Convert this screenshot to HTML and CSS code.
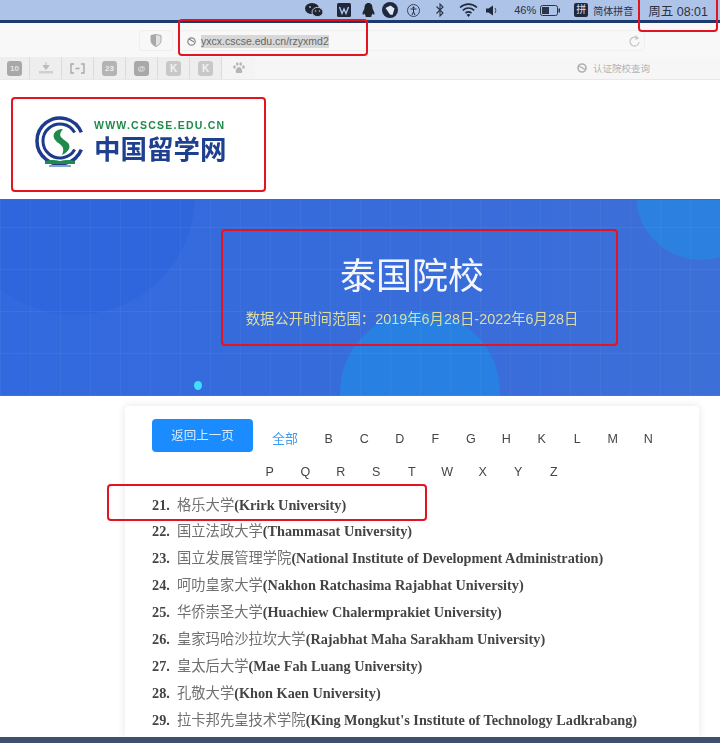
FILE: index.html
```html
<!DOCTYPE html>
<html lang="zh-CN">
<head>
    <meta charset="UTF-8">
    <meta name="viewport" content="width=device-width, initial-scale=1.0">
    <title>泰国院校</title>
    <link rel="stylesheet" href="styles.css">
</head>
<body>
<div class="page">
    <div class="menubar">
        <svg class="mi mi-wechat" width="18" height="14" viewBox="0 0 18 14"><ellipse cx="7" cy="5.5" rx="7" ry="5.5" fill="#20242e"/><ellipse cx="12.5" cy="9" rx="5.5" ry="4.6" fill="#20242e" stroke="#aec3e8"/><circle cx="10.5" cy="8" r=".8" fill="#aec3e8"/><circle cx="14.5" cy="8" r=".8" fill="#aec3e8"/><circle cx="5" cy="4" r=".9" fill="#aec3e8"/></svg>
        <svg class="mi mi-wps" width="14" height="14" viewBox="0 0 14 14"><rect width="14" height="14" rx="1.5" fill="#20283c"/><path d="M2.5 4l2.5 6.5L7 6l2 4.5L11.5 4" fill="none" stroke="#aec3e8" stroke-width="1.4"/></svg>
        <svg class="mi mi-bell" width="13" height="14" viewBox="0 0 13 14"><path d="M6.5 0C3.500 0 2.500 2.500 2.500 5 2.500 7 0 9 .5 11.500c.8.400 1.400-.5 1.800-1 .3 1 .8 1.800 1.500 2.300-.7.400-.7 1.200 1 1.200h3.400c1.700 0 1.700-.8 1-1.200.7-.5 1.200-1.300 1.500-2.300.4.500 1 1.400 1.800 1C13 9 10.500 7 10.500 5c0-2.500-1-5-4-5z" fill="#20242e"/></svg>
        <svg class="mi mi-shield" width="16" height="16" viewBox="0 0 16 16"><circle cx="8" cy="8" r="8" fill="#20283c"/><path d="M3.500 6 8.500 3.500l4 3-2 6.500-2.500-.5z" fill="#dfe8f8"/></svg>
        <svg class="mi mi-access" width="13" height="13" viewBox="0 0 13 13"><circle cx="6.500" cy="6.500" r="6" fill="none" stroke="#3a4258"/><circle cx="6.500" cy="3.500" r="1" fill="#20283c"/><path d="M3.500 5h6M6.500 5v3M6.500 8l-1.500 3M6.500 8l1.500 3" stroke="#20283c" fill="none"/></svg>
        <svg class="mi mi-bt" width="8" height="14" viewBox="0 0 8 14"><path d="M.5 3.500 7 10 4 13V1l3 3-6.500 6.500" fill="none" stroke="#2c3448" stroke-width="1.1"/></svg>
        <svg class="mi mi-wifi" width="19" height="14" viewBox="0 0 19 14"><path d="M1 4.500c5-4.500 12-4.500 17 0M3.800 7.300c3.500-3 8-3 11.400 0M6.500 10c2-1.500 4-1.500 6 0" fill="none" stroke="#20283c" stroke-width="1.6"/><path d="M9.500 14l-1.900-2.300c1.200-.8 2.600-.8 3.800 0z" fill="#20283c"/></svg>
        <svg class="mi mi-sound" width="12" height="11" viewBox="0 0 12 11"><path d="M0 3.500h2.500L7 .5v10L2.500 7.500H0z" fill="#20283c"/><path d="M9 3c1 1.500 1 3.500 0 5" fill="none" stroke="#3a4258"/></svg>
        <span class="mi mi-percent">46%</span>
        <svg class="mi mi-battery" width="20" height="11" viewBox="0 0 20 11"><rect x=".5" y=".5" width="17" height="10" rx="2" fill="none" stroke="#2c3448"/><rect x="2" y="2" width="7" height="7" fill="#2c3448"/><rect x="18.500" y="3.500" width="1.500" height="4" fill="#2c3448"/></svg>
        <span class="mi mi-ime">拼</span>
        <span class="mi mi-imetext">简体拼音</span>
        <span class="mi mi-time">周五 08:01</span>
    </div>
    <div class="strip"></div>

    <div class="toolbar">
        <div class="shield-btn">
            <svg width="12" height="13" viewBox="0 0 12 13"><path d="M1 1.500 6 .5l5 1v5c0 3-2.500 5-5 6-2.500-1-5-3-5-6z" fill="#e2e2e2" stroke="#a8a8a8"/><path d="M1 1.500 6 .5v12c-2.500-1-5-3-5-6z" fill="#a8a8a8"/></svg>
        </div>
        <div class="address">
            <svg class="site-icon" width="9" height="9" viewBox="0 0 9 9"><circle cx="4.500" cy="4.500" r="3.700" fill="none" stroke="#888" stroke-width="1.2"/><path d="M2 2l5 3" stroke="#888" stroke-width="1.2"/></svg>
            <span class="url">yxcx.cscse.edu.cn/rzyxmd2</span>
            <svg class="reload" width="11" height="12" viewBox="0 0 11 12"><path d="M8.800 3.500A4.500 4.500 0 1 0 10 7" fill="none" stroke="#c0c0c0" stroke-width="1.1"/><path d="M6.500 .5l2.500 3-3 .8" fill="none" stroke="#c0c0c0" stroke-width="1.1"/></svg>
        </div>
    </div>

    <div class="bookmarks">
        <div class="bm-group">
            <div class="bm bm-first"><span class="bm-square bm-dark">10</span></div>
            <div class="bm">
                <svg width="14" height="12" viewBox="0 0 14 12"><path d="M7 0v5M4 3.500h6L7 7.500z" stroke="#bdbdbd" fill="#bdbdbd"/><rect x="0" y="9" width="14" height="2.500" fill="#cfcfcf"/></svg>
            </div>
            <div class="bm">
                <svg width="15" height="11" viewBox="0 0 15 11"><path d="M4 1H1v9h3M11 1h3v9h-3M5.500 5.500h4" fill="none" stroke="#a9a9a9" stroke-width="1.4"/></svg>
            </div>
            <div class="bm"><span class="bm-square bm-chain">23</span></div>
            <div class="bm"><span class="bm-square bm-dark">@</span></div>
            <div class="bm"><span class="bm-square bm-light">K</span></div>
            <div class="bm"><span class="bm-square bm-light">K</span></div>
            <div class="bm bm-last">
                <svg width="12" height="12" viewBox="0 0 12 12" fill="#b5b5b5"><ellipse cx="1.500" cy="5" rx="1.300" ry="1.700"/><ellipse cx="4.300" cy="2" rx="1.300" ry="1.800"/><ellipse cx="7.700" cy="2" rx="1.300" ry="1.800"/><ellipse cx="10.500" cy="5" rx="1.300" ry="1.700"/><path d="M6 5C4 5 2.500 8 2.800 10c.3 1.500 2 1 3.200 1s2.900.5 3.200-1C9.500 8 8 5 6 5z"/></svg>
            </div>
        </div>
        <div class="verify">
            <svg width="10" height="10" viewBox="0 0 10 10"><circle cx="5" cy="5" r="4" fill="none" stroke="#b0b0b0" stroke-width="1.6"/><path d="M2 3l6 3.500" stroke="#b0b0b0" stroke-width="1.4"/></svg>
            <span>认证院校查询</span>
        </div>
    </div>

    <div class="logo-area">
        <svg class="logo-mark" width="50" height="52" viewBox="0 0 50 52">
            <path d="M46.300 16.400A23 23 0 1 0 46.300 33.600" fill="none" stroke="#1d3a8f" stroke-width="3.5"/>
            <path d="M39.700 16.500A17 17 0 1 0 39.700 33.500" fill="none" stroke="#1d3a8f" stroke-width="3"/>
            <path d="M28 13C19 13 16 20 21 25 25 29 31 30 27 39 34 36 37 30 32 26 27 22 22 20 28 13z" fill="#1f8a4c"/>
            <path d="M10 45c5-1.500 10-1.500 15 0 5-1.500 10-1.500 15 0v3H10z" fill="#1f8a4c"/>
            <path d="M14 49h22v2H14z" fill="#8aa3c8"/>
        </svg>
        <div class="logo-text">
            <div class="logo-url">WWW.CSCSE.EDU.CN</div>
            <div class="logo-name">中国留学网</div>
        </div>
    </div>

    <div class="banner">
        <div class="circle circle-left"></div>
        <div class="circle circle-right"></div>
        <div class="circle circle-bottom"></div>
        <div class="banner-grid"></div>
        <div class="banner-text">
            <h1>泰国院校</h1>
            <p>数据公开时间范围：2019年6月28日-2022年6月28日</p>
        </div>
        <div class="banner-dot"></div>
    </div>

    <div class="main">
        <div class="card">
            <div class="filter">
                <a class="back-button">返回上一页</a>
                <div class="letters">
                    <span class="letter-all">全部</span>
                    <span class="letter">B</span>
                    <span class="letter">C</span>
                    <span class="letter">D</span>
                    <span class="letter">F</span>
                    <span class="letter">G</span>
                    <span class="letter">H</span>
                    <span class="letter">K</span>
                    <span class="letter">L</span>
                    <span class="letter">M</span>
                    <span class="letter">N</span>
                    <span class="letter">P</span>
                    <span class="letter">Q</span>
                    <span class="letter">R</span>
                    <span class="letter">S</span>
                    <span class="letter">T</span>
                    <span class="letter">W</span>
                    <span class="letter">X</span>
                    <span class="letter">Y</span>
                    <span class="letter">Z</span>
                </div>
            </div>
            <ul class="schools">
                <li><b class="num">21.</b><span class="cn">格乐大学</span><b>(Krirk University)</b></li>
                <li><b class="num">22.</b><span class="cn">国立法政大学</span><b>(Thammasat University)</b></li>
                <li><b class="num">23.</b><span class="cn">国立发展管理学院</span><b>(National Institute of Development Administration)</b></li>
                <li><b class="num">24.</b><span class="cn">呵叻皇家大学</span><b>(Nakhon Ratchasima Rajabhat University)</b></li>
                <li><b class="num">25.</b><span class="cn">华侨崇圣大学</span><b>(Huachiew Chalermprakiet University)</b></li>
                <li><b class="num">26.</b><span class="cn">皇家玛哈沙拉坎大学</span><b>(Rajabhat Maha Sarakham University)</b></li>
                <li><b class="num">27.</b><span class="cn">皇太后大学</span><b>(Mae Fah Luang University)</b></li>
                <li><b class="num">28.</b><span class="cn">孔敬大学</span><b>(Khon Kaen University)</b></li>
                <li><b class="num">29.</b><span class="cn">拉卡邦先皇技术学院</span><b>(King Mongkut's Institute of Technology Ladkrabang)</b></li>
            </ul>
        </div>
    </div>
    <div class="dock-edge"></div>

    <!-- red marks drawn over the screenshot -->
    <div class="mark mark-url"></div>
    <div class="mark mark-time"></div>
    <div class="mark mark-logo"></div>
    <div class="mark mark-banner"></div>
    <div class="mark mark-row"></div>
</div>
</body>
</html>
```

FILE: styles.css
```css
html, body {
    margin: 0;
    padding: 0;
    height: 100%;
    overflow: hidden;
    background-color: #fff;
}
.page {
    position: relative;
    display: flex;
    flex-direction: column;
    height: 743px;
    overflow: hidden;
    font-family: "Liberation Sans", "Noto Sans CJK SC", sans-serif;
    filter: blur(0.45px);
}

/* system menu bar */
.menubar {
    flex: none;
    height: 20px;
    display: flex;
    align-items: center;
    justify-content: flex-end;
    padding-right: 12px;
    background-color: #aec3e8;
    color: #2a3246;
}
.mi { flex: none; }
.mi-wps { margin-left: 14px; }
.mi-bell { margin-left: 11px; }
.mi-shield { margin-left: 7px; }
.mi-access { margin-left: 9px; }
.mi-bt { margin-left: 16px; }
.mi-wifi { margin-left: 15px; }
.mi-sound { margin-left: 8px; }
.mi-percent { margin-left: 16px; font-size: 11px; }
.mi-battery { margin-left: 4px; }
.mi-ime {
    margin-left: 14px;
    width: 14px;
    height: 14px;
    border-radius: 2px;
    background-color: #20283c;
    color: #d5def0;
    font-size: 10px;
    line-height: 14px;
    text-align: center;
}
.mi-imetext { margin-left: 5px; font-size: 10px; }
.mi-time { margin-left: 15px; font-size: 12.5px; white-space: nowrap; }
.strip {
    flex: none;
    height: 3px;
    background-color: #1d3a70;
}

/* browser toolbar */
.toolbar {
    flex: none;
    height: 34px;
    box-sizing: border-box;
    padding: 7px 75px 0 139px;
    display: flex;
    background-color: #f8f8f8;
}
.shield-btn {
    width: 34px;
    height: 21px;
    margin-right: 6px;
    display: flex;
    align-items: center;
    justify-content: center;
    box-sizing: border-box;
    border: 1px solid #eee;
    border-radius: 4px;
}
.address {
    flex: 1;
    height: 21px;
    box-sizing: border-box;
    padding: 1px 4px 0 7px;
    display: flex;
    align-items: center;
    background-color: #f8f8f8;
    border: 1px solid #f0f0f0;
    border-radius: 4px;
}
.site-icon { margin-right: 5px; }
.url {
    background-color: #d8d8d8;
    color: #666;
    font-size: 10.5px;
    line-height: 13px;
}
.reload { margin-left: auto; }

/* bookmarks */
.bookmarks {
    flex: none;
    height: 23px;
    display: flex;
    align-items: center;
    justify-content: space-between;
    background-color: #f6f6f6;
    border-bottom: 1px solid #e8e8e8;
    box-sizing: border-box;
}
.bm-group {
    display: flex;
    height: 100%;
    background-color: #eeeeee;
}
.bm {
    width: 32px;
    display: flex;
    align-items: center;
    justify-content: center;
    border-right: 1px solid #dcdcdc;
    box-sizing: border-box;
}
.bm-first { width: 30px; }
.bm-last { width: 33px; border-right: none; background-color: #f4f4f4; }
.bm-square {
    width: 15px;
    height: 15px;
    border-radius: 3px;
    font-size: 8px;
    line-height: 15px;
    text-align: center;
    font-weight: bold;
}
.bm-dark { background-color: #a8a8a8; color: #e4e4e4; }
.bm-chain { background-color: #b4b4b4; color: #eee; }
.bm-light { background-color: #c8c8c8; color: #f2f2f2; font-size: 10px; }
.verify {
    display: flex;
    align-items: center;
    gap: 6px;
    padding-right: 70px;
    color: #b4b4b4;
    font-size: 9.5px;
}

/* logo */
.logo-area {
    flex: none;
    height: 119px;
    box-sizing: border-box;
    padding: 36px 0 0 35px;
    display: flex;
    align-items: flex-start;
    background-color: #fff;
}
.logo-mark { margin-right: 9px; }
.logo-text { margin-top: 3px; }
.logo-url {
    color: #1f8a4c;
    font-size: 10.5px;
    font-weight: bold;
    letter-spacing: 1.25px;
    line-height: 12px;
    white-space: nowrap;
}
.logo-name {
    margin-top: 3px;
    color: #1f3f8f;
    font-size: 26.5px;
    font-weight: bold;
    line-height: 32px;
    white-space: nowrap;
}

/* banner */
.banner {
    position: relative;
    flex: none;
    height: 197px;
    overflow: hidden;
    background: linear-gradient(90deg, #3269de, #3d6fd8);
    border-top: 1px solid #5a5fb0;
    box-sizing: border-box;
}
.circle {
    position: absolute;
    border-radius: 50%;
}
.circle-left {
    left: -45px;
    top: -125px;
    width: 240px;
    height: 240px;
    background-color: #2f66de;
}
.circle-right {
    left: 636px;
    top: -70px;
    width: 130px;
    height: 130px;
    background-color: #2b80e0;
}
.circle-bottom {
    left: 340px;
    top: 112px;
    width: 160px;
    height: 160px;
    background-color: #2880e2;
}
.banner-grid {
    position: absolute;
    inset: 0;
    background-image:
        repeating-linear-gradient(90deg, rgba(255, 255, 255, 0.04) 0 1px, transparent 1px 30px),
        repeating-linear-gradient(0deg, rgba(255, 255, 255, 0.05) 0 1px, transparent 1px 42px);
}
.banner-text {
    position: relative;
    padding: 52px 0 0 104px;
    text-align: center;
}
.banner-text h1 {
    margin: 0;
    color: #f4f6fc;
    font-size: 36px;
    font-weight: normal;
    line-height: 50px;
}
.banner-text p {
    margin: 8px 0 0;
    color: #dcdca4;
    font-size: 14.4px;
    line-height: 18px;
}
.banner-dot {
    position: absolute;
    left: 194px;
    top: 181px;
    width: 8px;
    height: 9px;
    border-radius: 50%;
    background-color: #3fe0ff;
}

/* list card */
.main {
    flex: 1;
    min-height: 0;
    padding: 10px 21px 0 125px;
    background-color: #fff;
    overflow: hidden;
}
.card {
    height: 100%;
    box-sizing: border-box;
    padding: 13px 27px 0;
    border-radius: 4px 4px 0 0;
    background-color: #fff;
    box-shadow: 0 0 8px rgba(0, 0, 0, 0.1);
}
.filter {
    display: flex;
    align-items: flex-start;
}
.back-button {
    flex: none;
    width: 101px;
    height: 33px;
    border-radius: 4px;
    background-color: #1a8cff;
    color: #d8ecff;
    font-size: 12.5px;
    line-height: 34px;
    text-align: center;
}
.letters {
    flex: none;
    width: 420px;
    margin-left: -1px;
    padding-top: 4px;
    display: flex;
    flex-wrap: wrap;
    font-size: 12.5px;
    color: #444;
}
.letter-all {
    width: 59px;
    height: 33px;
    box-sizing: border-box;
    padding-right: 13px;
    text-align: right;
    color: #3f9cf5;
    font-size: 13px;
    line-height: 31px;
}
.letter {
    width: 35.5px;
    height: 33px;
    line-height: 33px;
    text-align: center;
}
.schools {
    list-style: none;
    margin: 1.5px 0 0;
    padding: 0;
    font-family: "Liberation Serif", "Noto Sans CJK SC", serif;
    font-size: 14.25px;
    line-height: 26.9px;
    color: #444;
    white-space: nowrap;
}
.schools li {
    height: 26.9px;
    display: flex;
    align-items: baseline;
}
.num {
    flex: none;
    width: 25px;
    color: #444;
}
.cn {
    font-family: "Noto Sans CJK SC", sans-serif;
    font-size: 14.3px;
    color: #707070;
}
.dock-edge {
    flex: none;
    height: 6px;
    background-color: #3f506e;
}

/* annotation boxes, they sit on top of the screenshot */
.mark {
    position: absolute;
    box-sizing: border-box;
    border: 2px solid #e3141f;
    border-radius: 4px;
}
.mark-url { left: 178px; top: 19px; width: 190px; height: 37px; }
.mark-time { left: 638px; top: -4px; width: 80px; height: 36px; }
.mark-logo { left: 11px; top: 97px; width: 255px; height: 95px; }
.mark-banner { left: 221px; top: 229px; width: 397px; height: 117px; }
.mark-row { left: 107px; top: 484px; width: 320px; height: 37px; }
```
